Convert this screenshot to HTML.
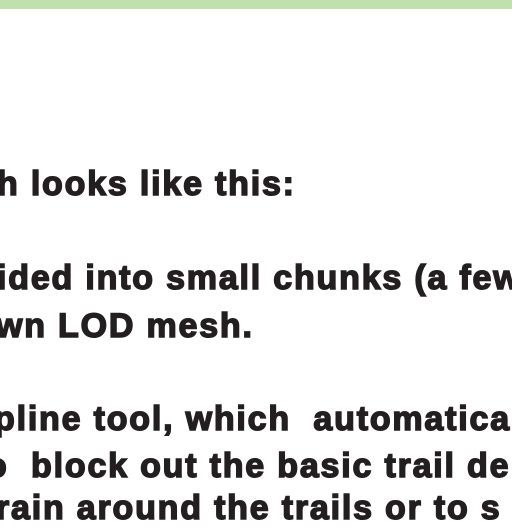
<!DOCTYPE html>
<html><head><style>
html,body{margin:0;padding:0;width:512px;height:512px;overflow:hidden;background:#fff;}
.bar{position:absolute;left:0;top:0;width:512px;height:9px;background:#c0e0ae;}
.t{position:absolute;white-space:nowrap;font-family:"Liberation Sans",sans-serif;font-weight:bold;font-size:34px;line-height:34px;color:#231f20;-webkit-text-stroke:1.5px #231f20;letter-spacing:1.8px;}
</style></head><body>
<div class="bar"></div>
<div class="t" style="left:-3px;top:167px">h looks like this:</div>
<div class="t" style="left:-3px;top:261px">ided into small chunks (a few</div>
<div class="t" style="left:-4px;top:309px">wn LOD mesh.</div>
<div class="t" style="left:-6px;top:402px">pline tool, which&nbsp; automatically</div>
<div class="t" style="left:-14px;top:449px">o&nbsp; block out the basic trail de</div>
<div class="t" style="left:-4px;top:491px">rain around the trails or to s</div>
</body></html>
